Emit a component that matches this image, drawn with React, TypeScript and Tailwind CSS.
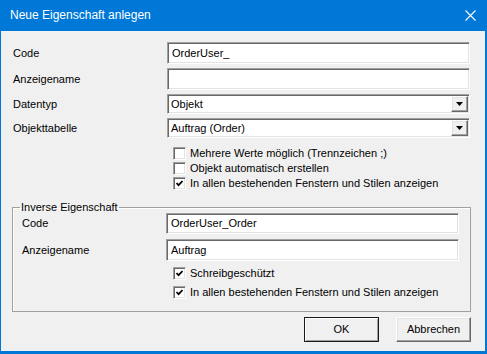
import * as React from "react";

const sunken =
  "border border-t-[#a0a0a0] border-l-[#a0a0a0] border-b-white border-r-white shadow-[inset_1px_1px_0_#696969,inset_-1px_-1px_0_#e3e3e3]";
const raised =
  "border border-t-white border-l-white border-b-[#696969] border-r-[#696969] shadow-[inset_-1px_-1px_0_#a0a0a0,inset_1px_1px_0_#e3e3e3]";

function TextBox({ value, w, h }: { value: string; w: string; h: string }) {
  return (
    <div className={`${sunken} bg-white flex items-center pl-[4px] ${w} ${h}`}>
      <span>{value}</span>
    </div>
  );
}

function Select({ value }: { value: string }) {
  return (
    <div className={`${sunken} bg-white flex items-center w-[303px] h-[20px] p-[1px]`}>
      <span className="flex-1 pl-[2px]">{value}</span>
      <div className={`${raised} bg-[#f0f0f0] w-[17px] h-[16px] flex items-center justify-center`}>
        <svg width="7" height="4" viewBox="0 0 7 4">
          <path d="M0 0 H7 L3.5 4 Z" fill="#000" />
        </svg>
      </div>
    </div>
  );
}

function Check({ label, checked, h }: { label: string; checked?: boolean; h: string }) {
  return (
    <div className={`flex items-center gap-[4px] ${h}`}>
      <div className={`${sunken} bg-white w-[13px] h-[13px] flex items-center justify-center`}>
        {checked ? (
          <svg width="7" height="7" viewBox="0 0 7 7">
            <path d="M0.5 3 L2.6 5.2 L6.5 1" stroke="#000" strokeWidth="1.7" fill="none" />
          </svg>
        ) : null}
      </div>
      <span>{label}</span>
    </div>
  );
}

function Button({ label, isDefault }: { label: string; isDefault?: boolean }) {
  return (
    <div
      className={`w-[75px] h-[25px] flex items-center justify-center bg-[#f0f0f0] ${
        isDefault ? "border border-[#1a1a1a] shadow-[inset_1px_1px_0_white,inset_-1px_-1px_0_#a0a0a0]" : raised
      }`}
    >
      {label}
    </div>
  );
}

export default function App() {
  return (
    <div
      className="w-[487px] h-[354px] bg-[#0078d7] flex flex-col text-[11px] text-black leading-[13px]"
      style={{ fontFamily: '"Liberation Sans", Arial, sans-serif' }}
    >
      {/* title bar */}
      <div className="h-[31px] flex items-center justify-between pl-[10px] pr-[11px] text-white text-[12px]">
        <span>Neue Eigenschaft anlegen</span>
        <svg width="11" height="11" viewBox="0 0 11 11">
          <path d="M0.5 0.5 L10.5 10.5 M10.5 0.5 L0.5 10.5" stroke="#fff" strokeWidth="1.1" />
        </svg>
      </div>

      {/* body */}
      <div className="flex-1 ml-[1px] mr-[2px] mb-[3px] bg-[#f0f0f0] pl-[11px] pt-[11px]">
        <div className="flex items-center">
          <span className="w-[155px] pl-[1px]">Code</span>
          <TextBox value="OrderUser_" w="w-[303px]" h="h-[22px]" />
        </div>
        <div className="flex items-center mt-[4px]">
          <span className="w-[155px] pl-[1px]">Anzeigename</span>
          <TextBox value="" w="w-[303px]" h="h-[22px]" />
        </div>
        <div className="flex items-center mt-[4px]">
          <span className="w-[155px] pl-[1px]">Datentyp</span>
          <Select value="Objekt" />
        </div>
        <div className="flex items-center mt-[4px]">
          <span className="w-[155px] pl-[1px]">Objekttabelle</span>
          <Select value="Auftrag (Order)" />
        </div>

        <div className="ml-[161px] mt-[8px]">
          <Check h="h-[15px]" label="Mehrere Werte möglich (Trennzeichen ;)" />
          <Check h="h-[15px]" label="Objekt automatisch erstellen" />
          <Check h="h-[15px]" checked label="In allen bestehenden Fenstern und Stilen anzeigen" />
        </div>

        <fieldset className="mt-[9px] w-[459px] border border-[#a0a0a0] pb-[9px] shadow-[inset_1px_1px_0_white]">
          <legend className="ml-[7px] px-[1px] leading-[14px]">Inverse Eigenschaft</legend>
          <div className="flex items-center -mt-[1px]">
            <span className="w-[153px] pl-[9px]">Code</span>
            <TextBox value="OrderUser_Order" w="w-[293px]" h="h-[21px]" />
          </div>
          <div className="flex items-center mt-[5px]">
            <span className="w-[153px] pl-[9px]">Anzeigename</span>
            <TextBox value="Auftrag" w="w-[293px]" h="h-[22px]" />
          </div>
          <div className="ml-[160px] mt-[3px]">
            <Check h="h-[19px]" checked label="Schreibgeschützt" />
            <Check h="h-[19px]" checked label="In allen bestehenden Fenstern und Stilen anzeigen" />
          </div>
        </fieldset>

        <div className="flex justify-end gap-[17px] mt-[5px] pr-[14px]">
          <Button label="OK" isDefault />
          <Button label="Abbrechen" />
        </div>
      </div>
    </div>
  );
}
